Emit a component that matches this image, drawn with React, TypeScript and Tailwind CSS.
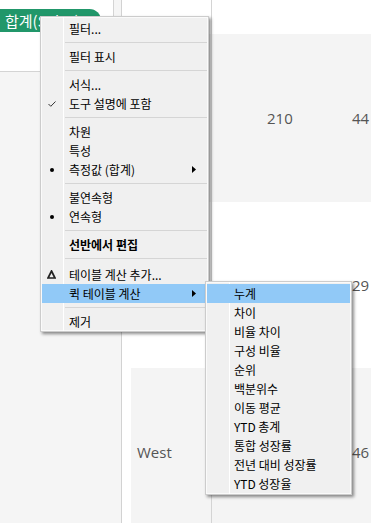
import React from 'react'

type Entry =
  | {
      kind: 'item'
      label: string
      mark?: 'check' | 'dot' | 'delta'
      arrow?: boolean
      bold?: boolean
      active?: boolean
    }
  | { kind: 'sep'; tall?: boolean }

const mainMenu: Entry[] = [
  { kind: 'item', label: '필터...' },
  { kind: 'sep' },
  { kind: 'item', label: '필터 표시' },
  { kind: 'sep' },
  { kind: 'item', label: '서식...' },
  { kind: 'item', label: '도구 설명에 포함', mark: 'check' },
  { kind: 'sep' },
  { kind: 'item', label: '차원' },
  { kind: 'item', label: '특성' },
  { kind: 'item', label: '측정값 (합계)', mark: 'dot', arrow: true },
  { kind: 'sep' },
  { kind: 'item', label: '불연속형' },
  { kind: 'item', label: '연속형', mark: 'dot' },
  { kind: 'sep' },
  { kind: 'item', label: '선반에서 편집', bold: true },
  { kind: 'sep', tall: true },
  { kind: 'item', label: '테이블 계산 추가...', mark: 'delta' },
  { kind: 'item', label: '퀵 테이블 계산', arrow: true, active: true },
  { kind: 'sep' },
  { kind: 'item', label: '제거' },
]

const quickCalcs = [
  '누계',
  '차이',
  '비율 차이',
  '구성 비율',
  '순위',
  '백분위수',
  '이동 평균',
  'YTD 총계',
  '통합 성장률',
  '전년 대비 성장률',
  'YTD 성장율',
]

// header / first value of rows 1-2 sit under the menus, so only the visible texts are kept
const rows = [
  { id: 'r1', header: '', values: ['210', '44'], shaded: true, height: 'h-[168px]' },
  { id: 'r2', header: '', values: ['', '29'], shaded: false, height: 'h-[166px]' },
  { id: 'r3', header: 'West', values: ['', '46'], shaded: true, height: 'h-[168px]' },
]

function Mark({ mark }: { mark: 'check' | 'dot' | 'delta' }) {
  if (mark === 'check') {
    return (
      <svg className="absolute left-[6px] top-[7px] w-[8px] h-[6px]" viewBox="0 0 8 6" fill="none">
        <path d="M0.5 3 L2.8 5.3 L7.5 0.5" stroke="#333" strokeWidth={1} />
      </svg>
    )
  }
  if (mark === 'dot') {
    return <div className="absolute left-[8px] top-[8px] w-[4px] h-[4px] rounded-full bg-black" />
  }
  return (
    <svg className="absolute left-[5px] top-[5px] w-[9px] h-[9px]" viewBox="0 0 9 9" fill="none">
      <path d="M4.5 1 L8 8 L1 8 Z" stroke="#222" strokeWidth={1.7} strokeLinejoin="miter" />
    </svg>
  )
}

function Arrow() {
  return (
    <svg className="absolute left-[150px] top-[6px] w-[4px] h-[7px]" viewBox="0 0 4 7">
      <path d="M0 0 L4 3.5 L0 7 Z" fill="#000" />
    </svg>
  )
}

function MenuRow({ entry }: { entry: Entry }) {
  if (entry.kind === 'sep') {
    return (
      <div className={`${entry.tall ? 'h-[11px]' : 'h-[9px]'} pl-[23px] pt-[4px] relative`}>
        <div className="h-px w-full bg-[#d5d5d5]" />
      </div>
    )
  }
  return (
    <div
      className={`relative h-[19px] pl-[27px] flex items-center whitespace-nowrap text-[12px] leading-[19px] text-black ${
        entry.active ? 'bg-[#91c9f7]' : ''
      } ${entry.bold ? 'font-bold' : ''}`}
    >
      {entry.mark && <Mark mark={entry.mark} />}
      {entry.label}
      {entry.arrow && <Arrow />}
    </div>
  )
}

export default function App() {
  return (
    <div className="relative w-[371px] h-[523px] overflow-hidden flex bg-white font-['Noto_Sans_CJK_KR',sans-serif]">
      {/* left shelf pane */}
      <div className="w-[122px] h-full flex-shrink-0 bg-[#f5f5f5] border-r border-[#d2d2d2]">
        <div className="w-[114px] h-[72px] bg-white border-r border-b border-[#d4d4d4] pt-[9px]">
          <div className="w-[101px] h-[23px] bg-[#21976a] rounded-l-[4px] rounded-r-full pl-[5px] flex items-center text-white text-[15px] leading-none whitespace-nowrap overflow-hidden">
            합계(Sales)
          </div>
        </div>
      </div>

      {/* table */}
      <div className="flex-1 h-full flex flex-col pl-[9px] font-['Open_Sans',sans-serif] text-[15px] text-[#555]">
        <div className="h-[34px] flex-shrink-0 flex">
          <div className="w-[81px] h-full border-r border-[#d4d4d4]" />
        </div>
        {rows.map((r) => (
          <div
            key={r.id}
            className={`${r.height} flex-shrink-0 flex items-stretch ${r.shaded ? 'bg-[#f4f4f4]' : 'bg-white'}`}
          >
            <div className="w-[81px] pl-[6px] flex items-center border-r border-[#d4d4d4]">
              {r.header}
            </div>
            <div className="w-[140px] pl-[55px] flex items-center">{r.values[0]}</div>
            <div className="flex items-center whitespace-nowrap">{r.values[1]}</div>
          </div>
        ))}
      </div>

      {/* context menu */}
      <div className="absolute left-[40px] top-[16px] w-[169px] bg-[#f0f0f0] border border-[#cccccc] px-[1px] pt-[2px] shadow-[inset_0_0_0_1px_#fafafa,2px_2px_3px_rgba(0,0,0,0.45)]">
        <div className="absolute left-[22px] top-0 bottom-0 w-px bg-white" />
        {mainMenu.map((e, i) => (
          <MenuRow key={i} entry={e} />
        ))}
      </div>

      {/* quick table calc submenu */}
      <div className="absolute left-[205px] top-[281px] w-[147px] bg-[#f0f0f0] border border-[#cccccc] px-[1px] pt-[2px] pb-[1px] shadow-[inset_0_0_0_1px_#fafafa,2px_2px_3px_rgba(0,0,0,0.45)]">
        <div className="absolute left-[23px] top-0 bottom-0 w-px bg-white" />
        {quickCalcs.map((label, i) => (
          <div
            key={label}
            className={`relative h-[19px] pl-[27px] flex items-center whitespace-nowrap text-[12px] leading-[19px] text-black ${
              i === 0 ? 'bg-[#91c9f7]' : ''
            }`}
          >
            {label}
          </div>
        ))}
      </div>
    </div>
  )
}
